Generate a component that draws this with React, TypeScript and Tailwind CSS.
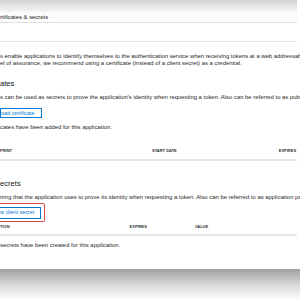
export default function App() {
  const body = "text-[5.9px] leading-[7px] text-[#1f1f1f] whitespace-nowrap";
  const head = "text-[4px] leading-[7px] font-bold text-[#333] uppercase whitespace-nowrap";
  return (
    <div
      className="w-[300px] h-[300px] overflow-hidden bg-white flex flex-col"
      style={{ fontFamily: '"Liberation Sans", Arial, sans-serif' }}
    >
      <div className="w-[297px] flex-1 flex flex-col bg-white">
        <div className="h-[12px] bg-gradient-to-b from-[#d2d2d2] to-[#f6f6f6]" />
        <div className="h-[11px] border-b border-[#e1e1e1] bg-[#fbfbfb] flex items-center">
          <span className="text-[5.9px] text-[#222] whitespace-nowrap">rtificates &amp; secrets</span>
        </div>
        <div className="h-[19px] border-b border-[#e6e6e6]" />
        <div className="mt-[11px]">
          <div className={body}>
            s enable applications to identify themselves to the authentication service when receiving tokens at a web addressable location (using an HTTPS scheme). For a higher
          </div>
          <div className={body}>
            el of assurance, we recommend using a certificate (instead of a client secret) as a credential.
          </div>
        </div>
        <div className="mt-[12px] h-[10px] flex items-center text-[7.6px] text-[#111] whitespace-nowrap">ates</div>
        <div className={"mt-[5px] " + body}>
          s can be used as secrets to prove the application's identity when requesting a token. Also can be referred to as public keys.
        </div>
        <div className="mt-[7px] w-[42px] h-[10px] border border-[#0078d4] flex items-center">
          <span className="text-[5.4px] text-[#0078d4] whitespace-nowrap">oad certificate</span>
        </div>
        <div className={"mt-[6px] " + body}>cates have been added for this application.</div>
        <div className="mt-[16px] h-[14px] border-b-2 border-[#e8e8e8] flex items-start">
          <span className={head}>print</span>
          <span className={"ml-[140px] " + head}>start date</span>
          <span className={"ml-[102px] " + head}>expires</span>
        </div>
        <div className="mt-[18px] h-[10px] flex items-center text-[7.6px] text-[#111] whitespace-nowrap">ecrets</div>
        <div className={"mt-[5px] " + body}>
          tring that the application uses to prove its identity when requesting a token. Also can be referred to as application password.
        </div>
        <div className="mt-[2px] w-[45px] h-[19px] border-[1.5px] border-l-0 border-[#e04848] rounded-r-[2px] flex items-center">
          <div className="w-[41px] h-[12px] border border-l-0 border-[#0078d4] flex items-center">
            <span className="text-[5.4px] text-[#0078d4] whitespace-nowrap">w client secret</span>
          </div>
        </div>
        <div className="mt-[1px] h-[13px] border-b-2 border-[#e8e8e8] flex items-start">
          <span className={head}>tion</span>
          <span className={"ml-[120px] " + head}>expires</span>
          <span className={"ml-[48px] " + head}>value</span>
        </div>
        <div className={"mt-[6px] " + body}>secrets have been created for this application.</div>
      </div>
      <div className="h-[31px] bg-gradient-to-b from-[#a0a0a0] via-[#d8d8d8] to-white" />
    </div>
  );
}
